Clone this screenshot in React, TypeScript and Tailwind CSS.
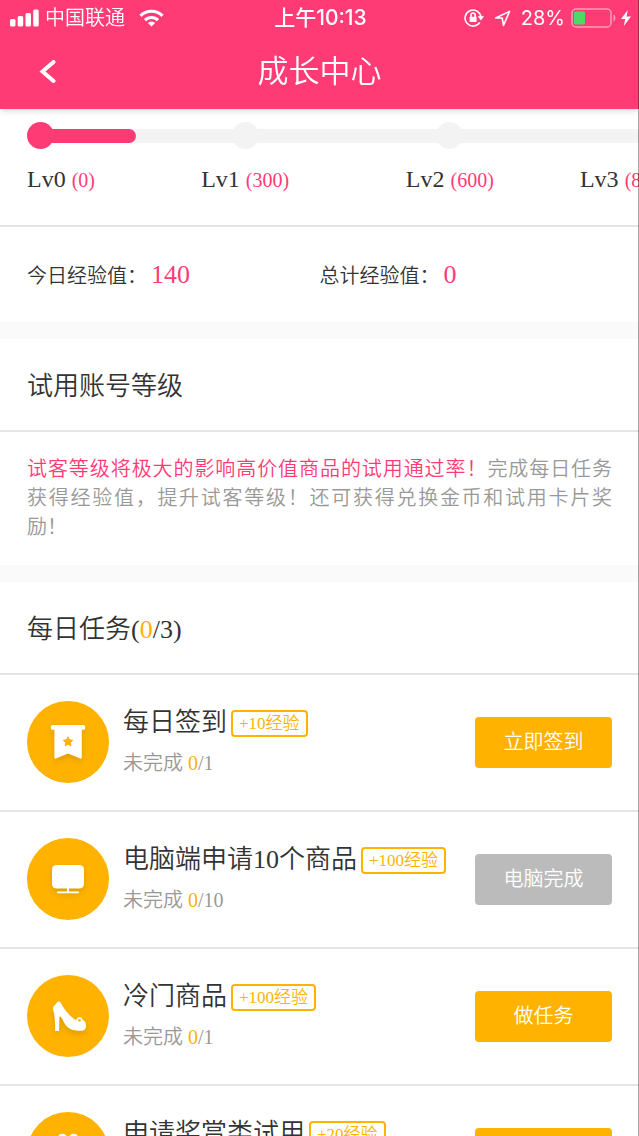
import type { ReactNode } from "react";

type Task = {
  id: string;
  title: string;
  reward: number;
  total: number;
  action: string;
  disabled?: boolean;
  icon: ReactNode;
};

const levels = [
  { name: "Lv0", exp: 0, align: "items-start", dot: "bg-[#ff3b76]" },
  { name: "Lv1", exp: 300, align: "items-center", dot: "bg-[#f3f3f3]" },
  { name: "Lv2", exp: 600, align: "items-center", dot: "bg-[#f3f3f3]" },
  { name: "Lv3", exp: 800, align: "items-end", dot: "bg-[#f3f3f3]" },
];

function BannerIcon() {
  return (
    <svg className="size-full" viewBox="0 0 82 82" fill="#fff">
      <path d="M25.5 24h31a1.6 1.6 0 0 1 1.6 1.6v1.6a1.6 1.6 0 0 1-1.6 1.6H54.8V56.6a1 1 0 0 1-1.5.9L41 52.6 28.9 57.5a1 1 0 0 1-1.5-.9V28.8H25.5a1.6 1.6 0 0 1-1.6-1.6v-1.6A1.6 1.6 0 0 1 25.5 24z" />
      <path
        fill="#ffb300"
        stroke="#ffb300"
        strokeLinejoin="round"
        d="M41 35.8l1.4 3 3.3.4-2.4 2.3.6 3.3-2.9-1.6-2.9 1.6.6-3.3-2.4-2.3 3.3-.4z"
      />
    </svg>
  );
}

function MonitorIcon() {
  return (
    <svg className="size-full" viewBox="0 0 82 82" fill="#fff">
      <rect x="25" y="27" width="32" height="23.5" rx="4.5" />
      <rect x="40" y="50" width="2" height="4" />
      <rect x="30" y="53.5" width="22" height="1.8" rx="0.9" />
    </svg>
  );
}

function ShoeIcon() {
  return (
    <svg className="size-full" viewBox="0 0 82 82" fill="#fff">
      <path d="M26.500 31.500 30.500 27c.9-.8 2.100-.6 2.900.3 3.600 6.300 7.700 12.300 13.300 16.500 1.500 1.100 2.800 1.500 4 .9 3.900-.9 8.100.6 8.300 5.200.1 4-1.200 5.600-4.800 5.800-4.600.3-10-.2-13.300-3.100-3.400-3-4.600-7.300-7-10.600-1-.9-1.400-.3-1.500 1L32 56h-3.800c0-6.300-.2-12.700-1.500-19.300-.8-1.700-1.100-3.700-.2-5.200z" />
      <circle cx="52.5" cy="45.3" r="2.2" fill="#ffb300" stroke="#fff" strokeWidth="1.6" />
    </svg>
  );
}

function GiftIcon() {
  return (
    <svg className="size-full" viewBox="0 0 82 82" fill="none" stroke="#fff" strokeWidth="3">
      <path d="M41 31c-2-7-4-8.500-7-7.500s-3 6.500 7 7.500c2-7 4-8.500 7-7.500s3 6.500-7 7.500z" />
      <path fill="#fff" d="M27 33h28v5H27zM29 42h24v14H29z" />
    </svg>
  );
}

const tasks: Task[] = [
  { id: "sign", title: "每日签到", reward: 10, total: 1, action: "立即签到", icon: <BannerIcon /> },
  {
    id: "pc",
    title: "电脑端申请10个商品",
    reward: 100,
    total: 10,
    action: "电脑完成",
    disabled: true,
    icon: <MonitorIcon />,
  },
  { id: "cold", title: "冷门商品", reward: 100, total: 1, action: "做任务", icon: <ShoeIcon /> },
  { id: "award", title: "申请奖赏类试用", reward: 20, total: 1, action: "做任务", icon: <GiftIcon /> },
];

function StatusBar() {
  return (
    <div className="grid h-9 grid-cols-[1fr_auto_1fr] items-center pl-2.5 pr-2 font-['Inter','Noto_Sans_CJK_SC',sans-serif] text-[20px] leading-6">
      <div className="flex items-center">
        <svg className="h-[18px] w-[29px]" viewBox="0 0 29 18" fill="currentColor">
          <rect x="0" y="10" width="5.5" height="7.5" rx="1.5" />
          <rect x="7.7" y="7" width="5.5" height="10.5" rx="1.5" />
          <rect x="15.5" y="4" width="5.5" height="13.5" rx="1.5" />
          <rect x="23.2" y="0.5" width="5.5" height="17" rx="1.5" />
        </svg>
        <span className="ml-1.5">中国联通</span>
        <svg className="ml-3.5 h-[18px] w-[25px]" viewBox="0 0 25 18" fill="none" stroke="currentColor" strokeWidth="3.2">
          <path d="M1.5 6.8a15.6 15.6 0 0 1 22 0" />
          <path d="M6 11.2a9.2 9.2 0 0 1 13 0" />
          <path fill="currentColor" stroke="none" d="M8.8 13.9a5.3 5.3 0 0 1 7.4 0L12.5 17.6z" />
        </svg>
      </div>
      <span className="text-[21px] font-medium">上午10:13</span>
      <div className="flex items-center justify-end">
        <svg className="h-5 w-5" viewBox="0 0 20 20" fill="none" stroke="currentColor" strokeWidth="1.6">
          <path d="M15.8 14.4A8 8 0 1 1 17 9" />
          <path fill="currentColor" stroke="none" d="M13.8 8.2h6.2l-3.1 4.2z" />
          <rect x="5.600" y="8.800" width="7" height="5.200" rx="0.800" fill="currentColor" stroke="none" />
          <path d="M7 9V7.200a2.100 2.100 0 0 1 4.200 0V9" />
        </svg>
        <svg className="ml-2.5 h-[17px] w-[17px]" viewBox="0 0 17 17" fill="none" stroke="currentColor" strokeWidth="1.6" strokeLinejoin="round">
          <path d="M15.600 1.400 1.600 8h6.600l1.300 7.400z" />
        </svg>
        <span className="ml-2.5 font-normal">28%</span>
        <svg className="ml-1.5 h-5 w-[46px]" viewBox="0 0 46 20" fill="none">
          <rect x="1" y="1" width="39" height="18" rx="4" stroke="#fff" strokeOpacity="0.5" strokeWidth="1.5" />
          <rect x="3" y="3.500" width="11" height="13" rx="1.500" fill="#4cd964" />
          <path d="M42.500 6.500c2.600 1.300 2.600 5.700 0 7z" fill="#fff" fillOpacity="0.5" />
        </svg>
        <svg className="ml-1 h-4 w-2.5" viewBox="0 0 10 16" fill="currentColor">
          <path d="M6.800 0 0 9h4.200L2.800 16 10 6.500H5.600z" />
        </svg>
      </div>
    </div>
  );
}

function SectionTitle({ children }: { children: ReactNode }) {
  return (
    <h2 className="flex h-[93px] items-center border-b-2 border-[#e5e5e5] px-[27px] pt-1 text-[26px] leading-9">
      {children}
    </h2>
  );
}

function TaskRow({ task }: { task: Task }) {
  return (
    <li className="flex items-center border-b-2 border-[#e5e5e5] px-[27px] pt-[26px] pb-[27px]">
      <div className="size-[82px] shrink-0 rounded-full bg-[#ffb300] [&>svg]:drop-shadow-md">{task.icon}</div>
      <div className="ml-3.5 min-w-0 flex-1">
        <div className="flex items-center gap-1 whitespace-nowrap">
          <h3 className="text-[26px] leading-9">{task.title}</h3>
          <span className="rounded-sm border-2 border-[#ffb300] px-1.5 text-[17px] leading-[23px] text-[#ffb300]">
            +{task.reward}经验
          </span>
        </div>
        <p className="mt-1.5 text-[20px] leading-8 text-[#999]">
          未完成 <span className="text-[#ffb300]">0</span>/{task.total}
        </p>
      </div>
      <button
        type="button"
        disabled={task.disabled}
        className="h-[51px] w-[137px] shrink-0 rounded-sm bg-[#ffb300] text-[20px] text-white disabled:bg-[#bbb]"
      >
        {task.action}
      </button>
    </li>
  );
}

export default function App() {
  return (
    <div className="relative flex h-screen flex-col overflow-hidden bg-white font-['Liberation_Serif','Noto_Sans_CJK_SC',serif] font-[350] text-[#333]">
      <header className="z-10 shrink-0 bg-[#ff3b76] text-white shadow-md">
        <StatusBar />
        <div className="grid h-[73px] grid-cols-[1fr_auto_1fr] items-center px-9 pb-0.5">
          <button type="button" aria-label="返回" className="w-6">
            <svg className="h-6 w-6" viewBox="0 0 24 24" fill="none" stroke="currentColor" strokeWidth="4" strokeLinecap="round">
              <path d="M17.500 2 6.500 11.500 17.500 21" />
            </svg>
          </button>
          <h1 className="text-[31px] leading-10">成长中心</h1>
        </div>
      </header>

      <main className="flex-1 overflow-y-auto bg-[#fafafa] [scrollbar-width:none]">
        <section className="bg-white">
          <div className="overflow-x-auto border-b-2 border-[#e5e5e5] px-[27px] pt-[13px] pb-7 [scrollbar-width:none]">
            <div className="relative w-[641px]">
              <div className="absolute inset-x-3 top-[7px] h-3.5 bg-[#f3f3f3]">
                <div className="h-full w-[97px] rounded-r-full bg-[#ff3b76]" />
              </div>
              <ol className="relative flex justify-between">
                {levels.map((level) => (
                  <li key={level.name} className={`flex w-[27px] flex-col ${level.align}`}>
                    <span className={`size-[27px] rounded-full ${level.dot}`} />
                    <span className="mt-3.5 mb-0.5 text-2xl whitespace-nowrap">
                      {level.name} <span className="text-[20px] text-[#ff3b76]">({level.exp})</span>
                    </span>
                  </li>
                ))}
              </ol>
            </div>
          </div>
          <div className="grid h-[95px] grid-cols-2 items-center px-[27px] text-[20px]">
            <p className="flex items-baseline gap-1">
              今日经验值：<span className="text-[26px] text-[#ff3b76]">140</span>
            </p>
            <p className="flex items-baseline gap-1">
              总计经验值：<span className="text-[26px] text-[#ff3b76]">0</span>
            </p>
          </div>
        </section>

        <section className="mt-[17px] bg-white">
          <SectionTitle>试用账号等级</SectionTitle>
          <p className="px-[27px] pt-[23px] pb-[23px] text-[20px] leading-[29px] text-[#999]">
            <span className="block [text-align-last:justify]">
              <span className="text-[#ff3b76]">试客等级将极大的影响高价值商品的试用通过率！</span>
              完成每日任务
            </span>
            <span className="block [text-align-last:justify]">
              获得经验值，提升试客等级！还可获得兑换金币和试用卡片奖
            </span>
            励！
          </p>
        </section>

        <section className="mt-[17px] bg-white">
          <SectionTitle>
            每日任务(<span className="text-[#ffb300]">0</span>/3)
          </SectionTitle>
          <ul>
            {tasks.map((task) => (
              <TaskRow key={task.id} task={task} />
            ))}
          </ul>
        </section>
      </main>

      <div className="pointer-events-none absolute inset-y-0 right-0 z-20 w-px bg-black/35" />
    </div>
  );
}
